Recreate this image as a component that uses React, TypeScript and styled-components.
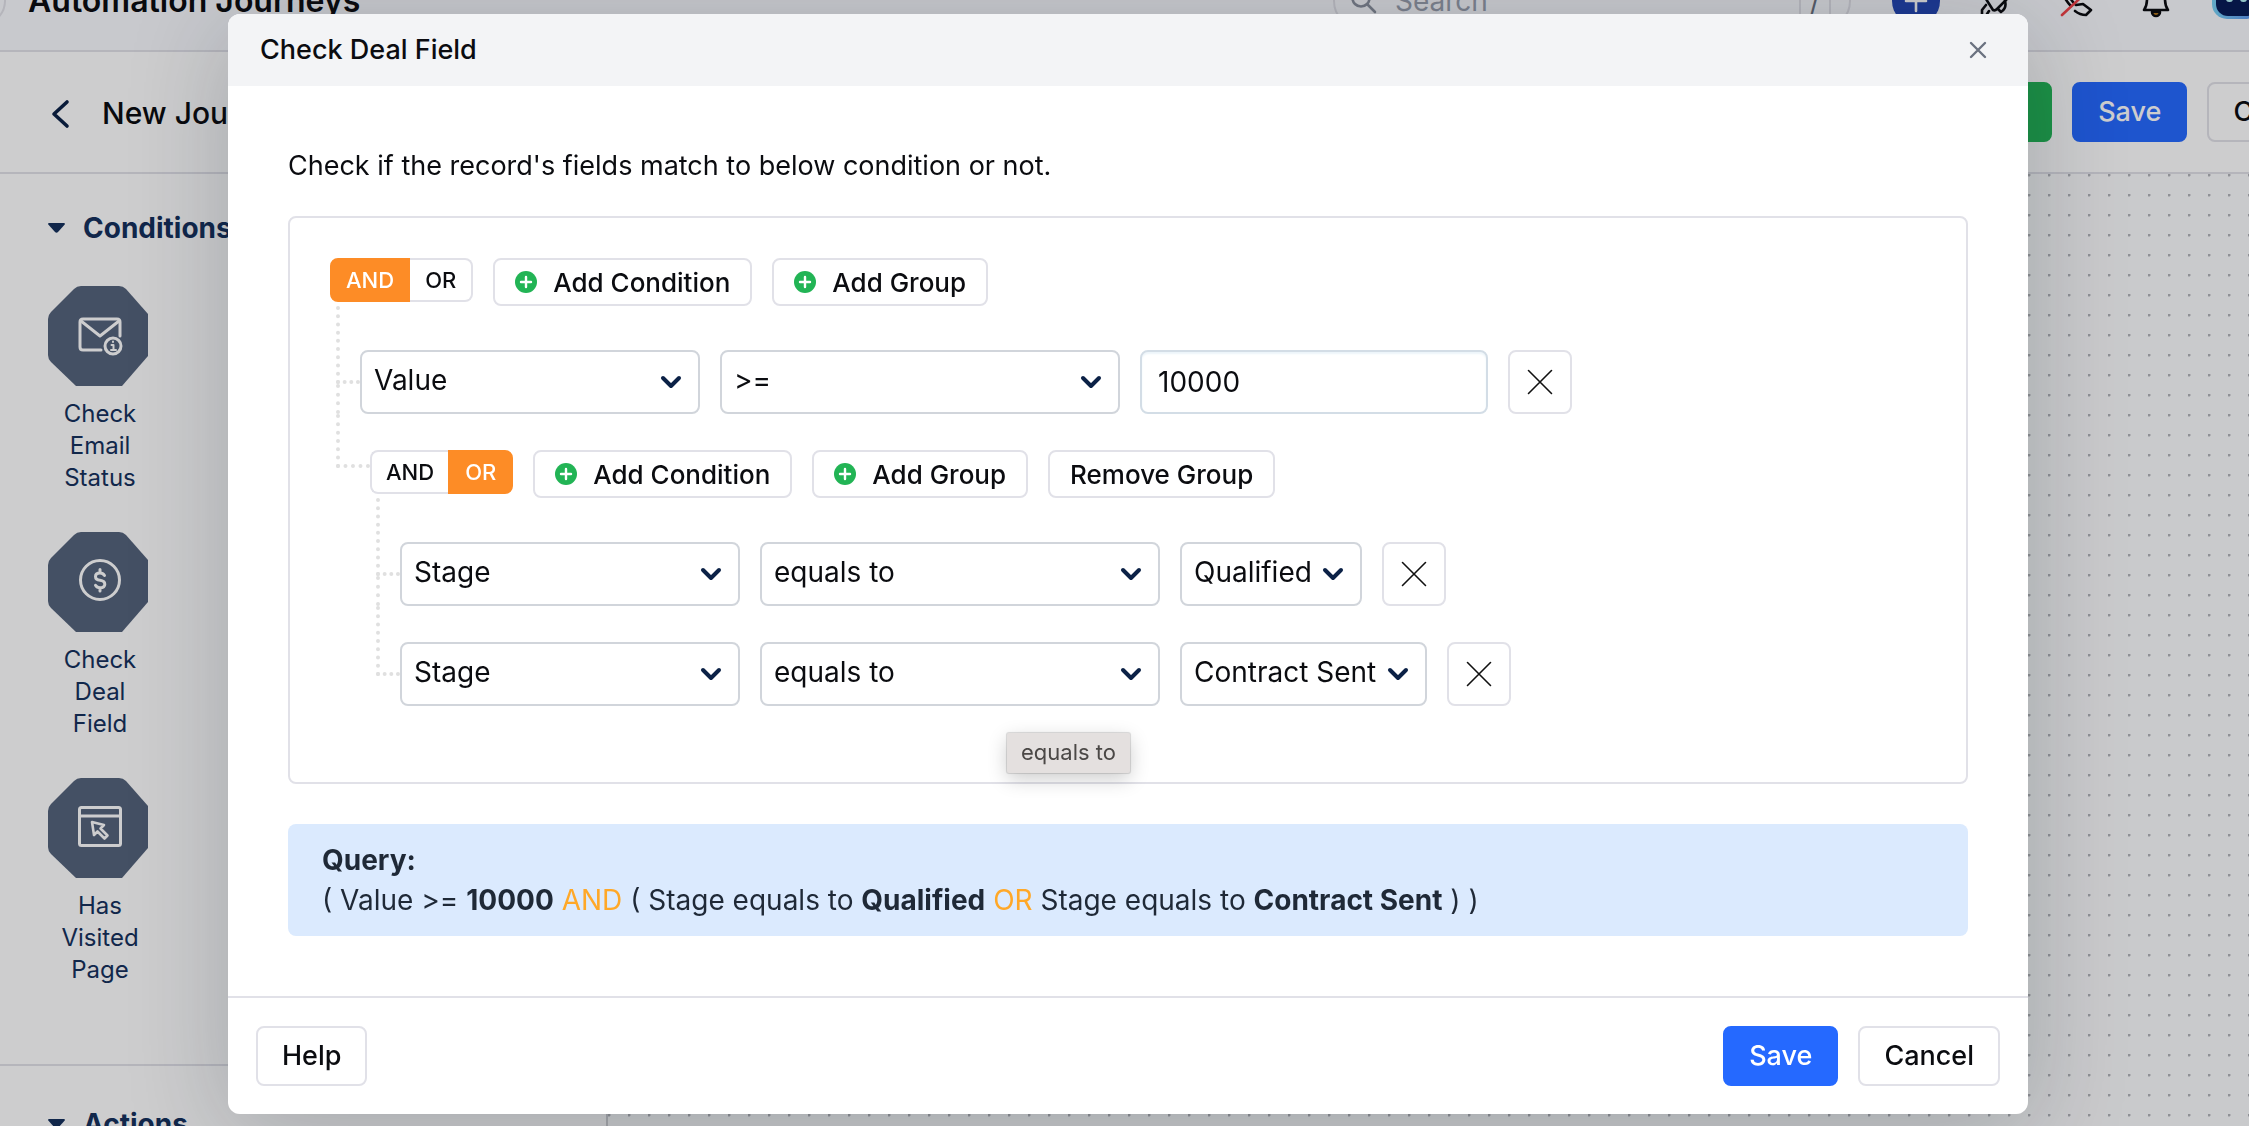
import React, { useState } from "react";
import styled, { createGlobalStyle, css } from "styled-components";

const color = {
  ink: "#0b0c10",
  navy: "#14305c",
  slate: "#54637b",
  line: "#e1e1e8",
  field: "#d1d5db",
  blue: "#2569ff",
  green: "#22b455",
  orange: "#fd8c26",
};

const GlobalStyle = createGlobalStyle`
  *, *::before, *::after { box-sizing: border-box; }
  body {
    margin: 0;
    overflow: hidden;
    font-family: Inter, "Liberation Sans", sans-serif;
    font-size: 28px;
    line-height: 40px;
    color: ${color.ink};
    background: #fff;
  }
  button, input, select { font: inherit; color: inherit; margin: 0; }
  h1, h2, h3, p, ul { margin: 0; padding: 0; }
  ul { list-style: none; }
`;

/* ---------- page behind the dialog ---------- */

const Viewport = styled.div`
  height: 100vh;
  overflow: hidden;
`;

const Page = styled.div`
  display: flex;
  flex-direction: column;
  width: calc(100% + 128px);
  height: 100%;
  overflow: hidden;
`;

const TopBar = styled.header`
  display: flex;
  flex: none;
  align-items: center;
  gap: 32px;
  height: 104px;
  margin-top: -52px;
  padding: 4px 117px 0 0;
  background: #f9fafe;
  border-bottom: 2px solid ${color.line};
`;

const CollapseButton = styled.button`
  flex: none;
  width: 48px;
  height: 48px;
  margin-left: -42px;
  margin-right: -10px;
  background: none;
  border: 2px solid ${color.line};
  border-radius: 24px;
`;

const AppTitle = styled.h1`
  flex: 1;
  font-size: 32px;
  font-weight: 600;
`;

const SearchBox = styled.label`
  display: flex;
  align-items: center;
  gap: 18px;
  width: 518px;
  height: 56px;
  margin-right: 9px;
  padding: 0 18px 0 16px;
  border: 2px solid ${color.line};
  border-radius: 28px;
`;

const SearchInput = styled.input`
  flex: 1;
  min-width: 0;
  padding: 0;
  background: none;
  border: 0;
  outline: 0;
  &::placeholder { color: #99a0ae; opacity: 1; }
`;

const KeyHint = styled.kbd`
  width: 32px;
  font: inherit;
  text-align: center;
  color: #6b7280;
  border: 2px solid ${color.line};
  border-radius: 6px;
`;

const IconButton = styled.button<{ $solid?: boolean }>`
  display: grid;
  flex: none;
  place-items: center;
  width: 48px;
  height: 48px;
  padding: 0;
  border: 0;
  border-radius: 24px;
  background: ${(p) => (p.$solid ? "#2346b4" : "none")};
`;

const Toolbar = styled.div`
  display: flex;
  flex: none;
  align-items: center;
  gap: 20px;
  height: 122px;
  padding: 0 28px 0 40px;
  border-bottom: 2px solid ${color.line};
`;

const BackButton = styled.button`
  display: grid;
  place-items: center;
  width: 42px;
  height: 48px;
  padding: 4px 2px 0 0;
  background: none;
  border: 0;
`;

const JourneyName = styled.h2`
  flex: 1;
  padding-top: 2px;
  font-size: 30px;
  font-weight: 500;
`;

const Workspace = styled.div`
  display: flex;
  flex: 1;
  min-height: 0;
`;

const Sidebar = styled.aside`
  flex: none;
  width: 608px;
  border-right: 2px solid #cfd0d4;
`;

const Section = styled.section`
  padding: 34px 48px 78px;
  & + & {
    padding-top: 38px;
    border-top: 2px solid ${color.line};
  }
`;

const SectionTitle = styled.h3`
  display: flex;
  align-items: center;
  gap: 18px;
  margin-bottom: 38px;
  font-size: 28px;
  font-weight: 700;
  color: ${color.navy};
`;

const StepList = styled.ul`
  display: flex;
  flex-direction: column;
  gap: 38px;
`;

const Step = styled.li`
  display: flex;
  flex-direction: column;
  gap: 12px;
  width: 104px;
  font-size: 24px;
  line-height: 32px;
  text-align: center;
  color: ${color.navy};
`;

const Canvas = styled.main`
  flex: 1;
  background-color: #fbfcfd;
  background-image: radial-gradient(circle at 1px 1px, #b2b4b9 1px, transparent 2px);
  background-size: 20px 20px;
`;

/* ---------- shared buttons ---------- */

type Tone = "plain" | "primary" | "success";

const tones = {
  plain: css`
    color: ${color.ink};
    background: #fff;
    border-color: ${color.line};
  `,
  primary: css`
    color: #fff;
    background: ${color.blue};
    border-color: ${color.blue};
  `,
  success: css`
    color: #fff;
    background: ${color.green};
    border-color: ${color.green};
  `,
};

const Button = styled.button<{ $tone?: Tone; $wide?: boolean }>`
  flex: none;
  height: 60px;
  padding: 0 24px;
  min-width: ${(p) => (p.$wide ? "160px" : "0")};
  font-size: 27px;
  font-weight: 500;
  border: 2px solid;
  border-radius: 8px;
  ${(p) => tones[p.$tone ?? "plain"]}
`;

const SmallButton = styled.button`
  display: flex;
  flex: none;
  align-items: center;
  gap: 16px;
  height: 48px;
  padding: 0 20px;
  font-size: 26px;
  font-weight: 500;
  background: #fff;
  border: 2px solid ${color.line};
  border-radius: 8px;
`;

const SmallLabel = styled.span`
  padding-top: 2px;
`;

/* ---------- dialog ---------- */

const Overlay = styled.div`
  position: fixed;
  inset: 0;
  display: flex;
  padding: 14px 221px 12px 228px;
  background: rgba(3, 6, 12, 0.2);
`;

const DialogShadow = styled.div`
  display: flex;
  flex: 1;
  min-width: 0;
  border-radius: 12px;
  box-shadow: 0 16px 100px rgba(20, 30, 45, 0.22);
`;

const Dialog = styled.section`
  display: flex;
  flex: 1;
  flex-direction: column;
  min-width: 0;
  overflow: hidden;
  background: #fff;
  border-radius: 12px;
`;

const DialogHeader = styled.header`
  display: flex;
  align-items: center;
  justify-content: space-between;
  height: 72px;
  padding: 0 26px 0 32px;
  background: #f3f4f6;
`;

const DialogTitle = styled.h2`
  font-size: 27px;
  font-weight: 500;
`;

const CloseButton = styled.button`
  display: grid;
  place-items: center;
  width: 48px;
  height: 48px;
  padding: 0;
  background: none;
  border: 0;
`;

const DialogBody = styled.div`
  flex: 1;
  padding: 60px;
`;

const Intro = styled.p`
  font-size: 27px;
`;

const DialogFooter = styled.footer`
  display: flex;
  gap: 20px;
  padding: 28px;
  border-top: 2px solid ${color.line};
`;

const Spacer = styled.span`
  flex: 1;
`;

const Builder = styled.div`
  margin: 30px 0 40px;
  padding: 40px 40px 76px;
  border: 2px solid ${color.line};
  border-radius: 8px;
`;

const GroupBar = styled.div`
  display: flex;
  align-items: flex-start;
  gap: 20px;
`;

const Toggle = styled.div`
  display: flex;
  height: 44px;
`;

const ToggleButton = styled.button<{ $on: boolean; $side: "left" | "right" }>`
  padding: 0 ${(p) => (p.$side === "left" ? "14px" : "15px")};
  font-size: 22px;
  font-weight: 500;
  line-height: 28px;
  color: ${(p) => (p.$on ? "#fff" : color.ink)};
  background: ${(p) => (p.$on ? color.orange : "#fff")};
  border: 2px solid ${(p) => (p.$on ? color.orange : color.line)};
  border-radius: ${(p) => (p.$side === "left" ? "8px 0 0 8px" : "0 8px 8px 0")};
  ${(p) => !p.$on && (p.$side === "left" ? "border-right: 0;" : "border-left: 0;")}
`;

const Branches = styled.ul`
  padding-left: 6px;
`;

const Branch = styled.li<{ $group?: boolean }>`
  display: grid;
  grid-template-columns: ${(p) => (p.$group ? "34px" : "24px")} minmax(0, 1fr);
  --gap: 36px;
  &:first-child { --gap: 44px; }
`;

const BranchContent = styled.div`
  padding-top: var(--gap);
`;

/* dotted elbow that joins a row to its group, and its run down to the next row */
const Connector = styled.div<{ $group?: boolean; $last?: boolean }>`
  display: flex;
  flex-direction: column;
  &::before {
    content: "";
    height: calc(var(--gap) + ${(p) => (p.$group ? "18px" : "34px")});
    border: dotted #e0e0e0;
    border-width: 0 0 4px 4px;
  }
  &::after {
    content: "";
    flex: 1;
    border-left: ${(p) => (p.$last ? "0" : "4px dotted #e0e0e0")};
  }
`;

const Row = styled.div`
  display: flex;
  gap: 20px;
`;

const SelectWrap = styled.div<{ $width?: number }>`
  position: relative;
  display: grid;
  flex: none;
  align-items: center;
  width: ${(p) => (p.$width ? `${p.$width}px` : "auto")};
  height: 64px;
  & > * { grid-area: 1 / 1; }
  & > svg {
    justify-self: end;
    margin-right: 18px;
    pointer-events: none;
  }
`;

const Select = styled.select`
  width: 100%;
  height: 64px;
  padding: 0 48px 4px 12px;
  appearance: none;
  background: #fff;
  border: 2px solid ${color.field};
  border-radius: 8px;
`;

const ValueInput = styled.input`
  width: 348px;
  height: 64px;
  padding: 0 16px;
  background: #fff;
  border: 2px solid #d3dde6;
  border-radius: 8px;
  box-shadow: inset 0 2px 2px #edf5fa;
`;

const RemoveButton = styled.button`
  display: grid;
  flex: none;
  place-items: center;
  width: 64px;
  height: 64px;
  padding: 0;
  background: #fff;
  border: 2px solid ${color.line};
  border-radius: 8px;
`;

const Tooltip = styled.div`
  position: absolute;
  top: 91px;
  left: 247px;
  padding: 3px 14px 5px;
  font-size: 22px;
  line-height: 32px;
  white-space: nowrap;
  color: #4b4846;
  background: #e4e0df;
  border-radius: 2px;
  box-shadow: 0 0 1px 1px rgba(0, 0, 0, 0.14), 0 6px 20px rgba(0, 0, 0, 0.2);
`;

const QueryBox = styled.div`
  padding: 16px 34px;
  color: #1f2937;
  background: #dbeafe;
  border-radius: 8px;
`;

const Operator = styled.span`
  color: #ffa828;
`;

/* ---------- drawings ---------- */

const Chevron = () => (
  <svg width="22" height="14" viewBox="0 0 22 14" fill="none" stroke="#0b2146" strokeWidth="4" strokeLinecap="round" strokeLinejoin="round" aria-hidden="true">
    <path d="M3 3l8 8 8-8" />
  </svg>
);

const Plus = () => (
  <svg width="22" height="22" viewBox="0 0 22 22" aria-hidden="true">
    <circle cx="11" cy="11" r="11" fill={color.green} />
    <path d="M11 6v10M6 11h10" stroke="#fff" strokeWidth="2.4" strokeLinecap="round" />
  </svg>
);

const Cross = () => (
  <svg width="26" height="26" viewBox="0 0 26 26" stroke="#111" strokeWidth="1.6" strokeLinecap="round" aria-hidden="true">
    <path d="M1.500 1.500l23 23M24.500 1.500l-23 23" />
  </svg>
);

const Caret = () => (
  <svg width="17" height="10" viewBox="0 0 17 10" fill={color.navy} aria-hidden="true">
    <path d="M1 0h15q1.500 0.500 0.500 1.800L10 9q-1.500 1.400-3 0L0.500 1.800Q-0.500 0.500 1 0z" />
  </svg>
);

const glyphs = {
  email: (
    <>
      <path d="M72 50V36q0-3-3-3H35q-3 0-3 3v25q0 3 3 3h18" />
      <path d="M33 35l19 15 19-15" />
      <circle cx="65" cy="60" r="8" />
      <path d="M63.500 59h2v5M63 64h5M65 55.500v.6" strokeWidth="2" />
    </>
  ),
  deal: (
    <>
      <circle cx="52" cy="48" r="19.500" />
      <path d="M56.500 43.500q-1.500-2.500-4.500-2.500-4.500 0-4.500 3.500t4.500 3.700q4.800.6 4.800 4t-4.800 3.600q-3 0-4.500-2.500M52 37.500v3M52 56v3" />
    </>
  ),
  page: (
    <>
      <rect x="31.500" y="29.500" width="41" height="38" rx="2" />
      <path d="M32 38h40" />
      <path d="M44 44l12 3-3.500 3.500 7 7-3 3-7-7L46 57z" strokeWidth="2.600" />
    </>
  ),
};

const StepIcon = ({ kind }: { kind: keyof typeof glyphs }) => (
  <svg width="104" height="100" viewBox="0 0 104 100" fill="none" stroke="#fff" strokeWidth="3" strokeLinecap="round" strokeLinejoin="round" aria-hidden="true">
    <path d="M33 0h38q4 0 7 3l22 25v42L74 100H28L3 76q-3-3-3-7V33q0-4 3-7L26 3q3-3 7-3z" fill={color.slate} stroke="none" />
    {glyphs[kind]}
  </svg>
);

const strokeIcon = {
  width: 48,
  height: 48,
  viewBox: "0 0 48 48",
  fill: "none",
  stroke: "#0b0c10",
  strokeWidth: 2.6,
  strokeLinecap: "round" as const,
  strokeLinejoin: "round" as const,
  "aria-hidden": true,
};

const RocketIcon = () => (
  <svg {...strokeIcon}>
    <path d="M14 22l7 11q2 1 4-1l11-11q2-8 1-14-8-1-14 4z" />
    <path d="M26 32l3 3q6-4 4-11M14 28l-4 5v4M17 34l-2 3" />
  </svg>
);

const PhoneOffIcon = () => (
  <svg {...strokeIcon}>
    <path d="M19 29Q11 21 10 12l5-3 6 7-3 4q2 5 6 8l7-1 8 6-5 5q-6 0-11-4" />
    <path d="M10 38L38 12" stroke="#f04248" />
  </svg>
);

const BellIcon = () => (
  <svg {...strokeIcon}>
    <path d="M15 22q0-10 9-11 9 1 9 11 0 7 3 11H12q3-4 3-11z" />
    <path d="M20 35a4 4 0 0 0 8 0z" fill="#e8951c" />
  </svg>
);

const AvatarIcon = () => (
  <svg width="48" height="48" viewBox="0 0 48 48" aria-hidden="true">
    <defs>
      <linearGradient id="avatarRing" x1="0" y1="0" x2="1" y2="0">
        <stop offset="0" stopColor="#79d3f5" />
        <stop offset="1" stopColor="#5b8cf0" />
      </linearGradient>
    </defs>
    <rect x="0" y="2" width="48" height="40" rx="15" fill="url(#avatarRing)" />
    <rect x="4" y="5" width="42" height="34" rx="12" fill="#071b56" />
    <rect x="14" y="15" width="7" height="10" rx="3" fill="#b5f2f5" />
    <rect x="28" y="15" width="7" height="10" rx="3" fill="#b5f2f5" />
  </svg>
);

/* ---------- pieces ---------- */

const SelectField = ({ label, value, width, tip }: { label: string; value: string; width?: number; tip?: string }) => (
  <SelectWrap $width={width}>
    <Select aria-label={label} defaultValue={value}>
      <option>{value}</option>
    </Select>
    <Chevron />
    {tip && <Tooltip role="tooltip">{tip}</Tooltip>}
  </SelectWrap>
);

const GroupControls = ({ initial, removable }: { initial: "AND" | "OR"; removable?: boolean }) => {
  const [joiner, setJoiner] = useState(initial);
  return (
    <GroupBar>
      <Toggle role="group" aria-label="Match type">
        <ToggleButton type="button" $side="left" $on={joiner === "AND"} aria-pressed={joiner === "AND"} onClick={() => setJoiner("AND")}>
          AND
        </ToggleButton>
        <ToggleButton type="button" $side="right" $on={joiner === "OR"} aria-pressed={joiner === "OR"} onClick={() => setJoiner("OR")}>
          OR
        </ToggleButton>
      </Toggle>
      <SmallButton type="button"><Plus /><SmallLabel>Add Condition</SmallLabel></SmallButton>
      <SmallButton type="button"><Plus /><SmallLabel>Add Group</SmallLabel></SmallButton>
      {removable && <SmallButton type="button"><SmallLabel>Remove Group</SmallLabel></SmallButton>}
    </GroupBar>
  );
};

const Condition = ({ field, operator, last, tip, children }: { field: string; operator: string; last?: boolean; tip?: string; children: React.ReactNode }) => (
  <Branch>
    <Connector $last={last} />
    <BranchContent>
      <Row>
        <SelectField label="Field" value={field} width={340} />
        <SelectField label="Operator" value={operator} width={400} tip={tip} />
        {children}
        <RemoveButton type="button" aria-label="Remove condition"><Cross /></RemoveButton>
      </Row>
    </BranchContent>
  </Branch>
);

const steps: { kind: keyof typeof glyphs; label: string }[] = [
  { kind: "email", label: "Check Email Status" },
  { kind: "deal", label: "Check Deal Field" },
  { kind: "page", label: "Has Visited Page" },
];

export default function App() {
  return (
    <>
      <GlobalStyle />
      <Viewport>
        <Page>
          <TopBar>
            <CollapseButton type="button" aria-label="Toggle menu" />
            <AppTitle>Automation Journeys</AppTitle>
            <SearchBox>
              <svg width="26" height="26" viewBox="0 0 26 26" fill="none" stroke="#8b919e" strokeWidth="2.6" strokeLinecap="round" aria-hidden="true">
                <circle cx="10" cy="10" r="8.500" />
                <path d="M16.500 16.500L24 24" />
              </svg>
              <SearchInput type="text" placeholder="Search" aria-label="Search" />
              <KeyHint>/</KeyHint>
            </SearchBox>
            <IconButton type="button" $solid aria-label="Create">
              <svg width="24" height="24" viewBox="0 0 24 24" stroke="#fff" strokeWidth="2.6" strokeLinecap="round" aria-hidden="true">
                <path d="M12 2v20M2 12h20" />
              </svg>
            </IconButton>
            <IconButton type="button" aria-label="What's new"><RocketIcon /></IconButton>
            <IconButton type="button" aria-label="Calls"><PhoneOffIcon /></IconButton>
            <IconButton type="button" aria-label="Notifications"><BellIcon /></IconButton>
            <IconButton type="button" aria-label="Account"><AvatarIcon /></IconButton>
          </TopBar>
          <Toolbar>
            <BackButton type="button" aria-label="Back">
              <svg width="20" height="30" viewBox="0 0 20 30" fill="none" stroke="#0b2146" strokeWidth="3.600" strokeLinecap="round" strokeLinejoin="round" aria-hidden="true">
                <path d="M17 3L4 15l13 12" />
              </svg>
            </BackButton>
            <JourneyName>New Journey</JourneyName>
            <Button type="button" $tone="success" $wide aria-label="Publish" />
            <Button type="button" $tone="primary">Save</Button>
            <Button type="button">Cancel</Button>
          </Toolbar>
          <Workspace>
            <Sidebar>
              <Section>
                <SectionTitle><Caret />Conditions</SectionTitle>
                <StepList>
                  {steps.map((s) => (
                    <Step key={s.kind}>
                      <StepIcon kind={s.kind} />
                      {s.label}
                    </Step>
                  ))}
                </StepList>
              </Section>
              <Section>
                <SectionTitle><Caret />Actions</SectionTitle>
              </Section>
            </Sidebar>
            <Canvas />
          </Workspace>
        </Page>
      </Viewport>

      <Overlay>
        <DialogShadow>
          <Dialog role="dialog" aria-modal="true" aria-labelledby="dialog-title">
            <DialogHeader>
              <DialogTitle id="dialog-title">Check Deal Field</DialogTitle>
              <CloseButton type="button" aria-label="Close">
                <svg width="18" height="18" viewBox="0 0 18 18" stroke="#6b7280" strokeWidth="2.400" strokeLinecap="round" aria-hidden="true">
                  <path d="M2 2l14 14M16 2L2 16" />
                </svg>
              </CloseButton>
            </DialogHeader>
            <DialogBody>
              <Intro>Check if the record's fields match to below condition or not.</Intro>
              <Builder>
                <GroupControls initial="AND" />
                <Branches>
                  <Condition field="Value" operator=">=">
                    <ValueInput type="text" aria-label="Value" defaultValue="10000" />
                  </Condition>
                  <Branch $group>
                    <Connector $group $last />
                    <BranchContent>
                      <GroupControls initial="OR" removable />
                      <Branches>
                        <Condition field="Stage" operator="equals to">
                          <SelectField label="Stage" value="Qualified" />
                        </Condition>
                        <Condition field="Stage" operator="equals to" last tip="equals to">
                          <SelectField label="Stage" value="Contract Sent" />
                        </Condition>
                      </Branches>
                    </BranchContent>
                  </Branch>
                </Branches>
              </Builder>
              <QueryBox>
                <p><strong>Query:</strong></p>
                <p>
                  ( Value &gt;= <strong>10000</strong> <Operator>AND</Operator> ( Stage equals to <strong>Qualified</strong>{" "}
                  <Operator>OR</Operator> Stage equals to <strong>Contract Sent</strong> ) )
                </p>
              </QueryBox>
            </DialogBody>
            <DialogFooter>
              <Button type="button">Help</Button>
              <Spacer />
              <Button type="button" $tone="primary">Save</Button>
              <Button type="button">Cancel</Button>
            </DialogFooter>
          </Dialog>
        </DialogShadow>
      </Overlay>
    </>
  );
}
